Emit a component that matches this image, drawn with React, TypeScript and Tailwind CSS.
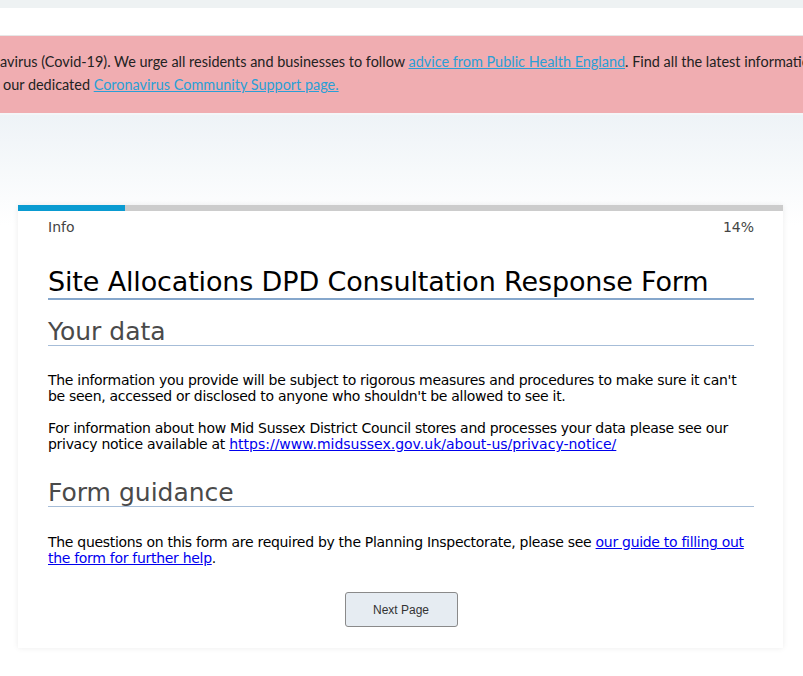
import React from "react";

const body = { fontFamily: '"DejaVu Sans", Verdana, sans-serif' };

function Banner() {
  return (
    <div
      className="h-[77px] overflow-hidden bg-[#f0adb1] pt-[14px] text-[14.45px] leading-[23px] text-[#222] whitespace-nowrap"
      style={{ fontFamily: "Lato, sans-serif" }}
    >
      <div>
        avirus (Covid-19). We urge all residents and businesses to follow{" "}
        <a href="#" className="text-[#2a9fd6] underline">
          advice from Public Health England
        </a>
        . Find all the latest information on our website.
      </div>
      <div className="ml-[3px]">
        our dedicated{" "}
        <a href="#" className="text-[#2a9fd6] underline">
          Coronavirus Community Support page.
        </a>
      </div>
    </div>
  );
}

function SectionHeading({ children }: { children: React.ReactNode }) {
  return (
    <h2 className="border-b border-[#a6bdd8] text-[25px] leading-[26px] text-[#4a4a4a]">
      {children}
    </h2>
  );
}

export default function App() {
  return (
    <div className="min-h-[676px] bg-white">
      <div className="h-[8px] bg-[#eef2f3]" />
      <div className="h-[28px] border-b border-[#e6e6e6] bg-white" />
      <Banner />
      <div className="h-[2px] bg-[#f4f6f8]" />
      <div className="bg-gradient-to-b from-[#eef3f7] to-white to-[110px] pl-[18px] pr-[20px] pt-[90px] pb-[28px]">
        <div className="bg-white shadow-[0_0_6px_rgba(0,0,0,0.08)]" style={body}>
          <div className="flex h-[6px] bg-[#cccccc]">
            <div className="w-[14%] bg-[#0a9bd1]" />
          </div>
          <div className="pl-[30px] pr-[29px] pb-[21px]">
            <div className="flex justify-between pt-[6px] text-[14px] leading-[20px] text-[#444]">
              <span>Info</span>
              <span>14%</span>
            </div>
            <h1 className="mt-[29px] border-b-2 border-[#86a7cc] text-[27px] leading-[32px] tracking-[-0.15px] text-black">
              Site Allocations DPD Consultation Response Form
            </h1>
            <div className="mt-[19px]">
              <SectionHeading>Your data</SectionHeading>
            </div>
            <div className="mt-[26px] text-[14px] leading-[16px] tracking-[-0.3px] text-black">
              <p>
                The information you provide will be subject to rigorous measures and procedures to
                make sure it can't be seen, accessed or disclosed to anyone who shouldn't be allowed
                to see it.
              </p>
              <p className="mt-[16px]">
                For information about how Mid Sussex District Council stores and processes your data
                please see our privacy notice available at{" "}
                <a href="#" className="text-[#0000ee] underline tracking-normal">
                  https://www.midsussex.gov.uk/about-us/privacy-notice/
                </a>
              </p>
            </div>
            <div className="mt-[28px]">
              <SectionHeading>Form guidance</SectionHeading>
            </div>
            <p className="mt-[27px] text-[14px] leading-[16px] tracking-[-0.3px] text-black">
              The questions on this form are required by the Planning Inspectorate, please see{" "}
              <a href="#" className="text-[#0000ee] underline">
                our guide to filling out the form for further help
              </a>
              .
            </p>
            <div className="mt-[26px] flex justify-center">
              <button
                className="h-[35px] w-[113px] rounded-[3px] border border-[#8a8a8a] bg-[#e6ecf2] text-[12px] text-[#333]"
                style={{ fontFamily: '"Liberation Sans", Arial, sans-serif' }}
              >
                Next Page
              </button>
            </div>
          </div>
        </div>
      </div>
    </div>
  );
}
